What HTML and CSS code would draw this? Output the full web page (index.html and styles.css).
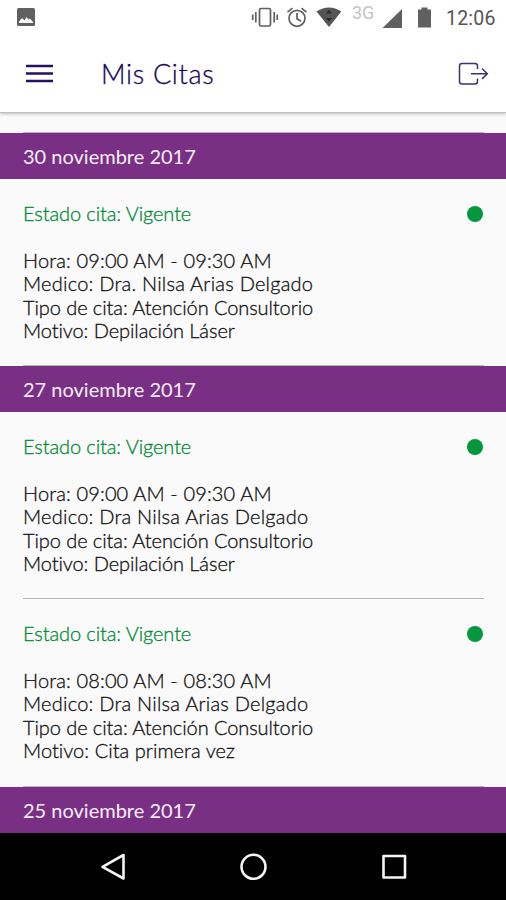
FILE: index.html
```html
<!DOCTYPE html>
<html lang="es">
<head>
<meta charset="utf-8">
<title>Mis Citas</title>
<link rel="stylesheet" href="styles.css">
</head>
<body>
<div class="screen">
  <header class="top">
    <div class="status">
      <svg class="picture" width="18" height="18" viewBox="0 0 18 18"><rect width="18" height="18" rx="1.500" fill="#606060"/><path d="M2 15V13.500l3-3.500 2.500 2.500L9.500 9l2 2.500 1.500-1 3 3.500v1z" fill="#fff"/></svg>
      <svg class="indicators" width="184" height="32" viewBox="250 0 184 32">
        <g fill="none" stroke="#606060" stroke-width="1.700">
          <rect x="259.500" y="8.500" width="11" height="17.500" rx="1.500"/>
          <path d="M255.800 12v10.500M252.700 14.500v5.500M274.200 12v10.500M277.200 14.500v5.500"/>
          <circle cx="297" cy="18.300" r="8"/><path d="M297 13v5.700l4 2.500M287.500 12.200l5-4M306.500 12.200l-5-4"/>
        </g>
        <path d="M316.500 11.500Q329 3.500 341.300 11.500L329 27z" fill="#555"/>
        <path d="M326 13.500l3-3.500 3 3.500zM326 18l3 3.500 3-3.500z" fill="#292929"/>
        <path d="M382.500 28L402 9v19z" fill="#606060"/>
        <path d="M418 9.500h3.500V7.500h6v2H431V27.500H418z" fill="#606060"/>
      </svg>
      <span class="network">3G</span>
      <time class="clock">12:06</time>
    </div>
    <div class="toolbar">
      <svg class="menu" width="27" height="20" viewBox="0 0 27 20"><path d="M0 2h27M0 9.500h27M0 17h27" stroke="#25135f" stroke-width="2.500"/></svg>
      <h1>Mis Citas</h1>
      <svg class="exit" width="32" height="24" viewBox="0 0 32 24"><path d="M19.500 7V4Q19.500 1.500 17 1.500H4Q1.500 1.500 1.500 4v15.500Q1.500 22 4 22h13q2.500 0 2.500-2.500v-3M13 11.700H29.300M24 6.500l5.300 5.200-5.300 5.200" fill="none" stroke="#403073" stroke-width="1.500"/></svg>
    </div>
  </header>
  <main>
    <div class="rule"></div>
    <h2>30 noviembre 2017</h2>
    <article>
      <div class="state"><span>Estado cita: Vigente</span><i class="dot"></i></div>
      <p class="hour">Hora: 09:00 AM - 09:30 AM</p>
      <p class="doctor">Medico: Dra. Nilsa Arias Delgado</p>
      <p class="type">Tipo de cita: Atención Consultorio</p>
      <p class="reason">Motivo: Depilación Láser</p>
    </article>
    <div class="rule"></div>
    <h2>27 noviembre 2017</h2>
    <article>
      <div class="state"><span>Estado cita: Vigente</span><i class="dot"></i></div>
      <p class="hour">Hora: 09:00 AM - 09:30 AM</p>
      <p class="doctor">Medico: Dra Nilsa Arias Delgado</p>
      <p class="type">Tipo de cita: Atención Consultorio</p>
      <p class="reason">Motivo: Depilación Láser</p>
    </article>
    <div class="rule"></div>
    <article class="last">
      <div class="state"><span>Estado cita: Vigente</span><i class="dot"></i></div>
      <p class="hour">Hora: 08:00 AM - 08:30 AM</p>
      <p class="doctor">Medico: Dra Nilsa Arias Delgado</p>
      <p class="type">Tipo de cita: Atención Consultorio</p>
      <p class="first">Motivo: Cita primera vez</p>
    </article>
    <div class="rule"></div>
    <h2>25 noviembre 2017</h2>
  </main>
  <nav>
    <svg width="506" height="67" viewBox="0 833 506 67" fill="none" stroke="#f4f4f4" stroke-width="2.600" stroke-linejoin="round"><path d="M123.500 855v23.500L102.500 866.800z"/><circle cx="253.500" cy="866.800" r="12"/><rect x="383.500" y="856" width="21.500" height="21.500"/></svg>
  </nav>
</div>
</body>
</html>
```
FILE: styles.css
```css
* { box-sizing: border-box; }
body { margin: 0; background: #fafafa; font-family: Lato, sans-serif; font-variant-ligatures: none; }
h1, h2, p { margin: 0; font-weight: 400; }
svg { display: block; flex: none; }
.screen { width: 506px; height: 900px; display: flex; flex-direction: column; overflow: hidden; }
.top { height: 113px; flex: none; background: #fff; border-bottom: 1px solid #c0c2c1; box-shadow: 0 1px 3px #bbb; }
.status { height: 35px; display: flex; align-items: flex-start; position: relative; }
.picture { margin: 8px 0 0 17px; }
.indicators { margin-left: 215px; }
.network { position: absolute; left: 352px; top: 3px; font: 400 18px/20px Roboto, sans-serif; color: #c4c4c4; }
.clock { margin: 7px 0 0 12px; font: 400 19.500px/23px Roboto, sans-serif; letter-spacing: .2px; color: #555; }
.toolbar { height: 77px; display: flex; align-items: center; padding: 0 16px 0 26px; }
h1 { margin-left: 48px; font-size: 27px; line-height: 34px; font-weight: 300; letter-spacing: .7px; color: #180558; -webkit-text-stroke: .3px; white-space: nowrap; }
.exit { margin-left: auto; }
main { height: 720px; flex: none; padding-top: 19px; }
.rule { height: 1px; margin: 0 22px 0 23px; background: #b5b5b5; }
h2 { height: 46px; padding-left: 23px; background: #792f83; color: #f6edf7; font-size: 20px; line-height: 47px; }
article { height: 186px; padding: 23px 23px 0; color: #111; font-size: 20px; font-weight: 300; line-height: 23.500px; -webkit-text-stroke: .3px; }
article.last { height: 187px; }
article p { font-weight: 300; white-space: nowrap; }
.hour { letter-spacing: .13px; }
.doctor { letter-spacing: .23px; }
.type, .reason { letter-spacing: -.08px; }
.first { letter-spacing: .04px; }
.state { display: flex; justify-content: space-between; align-items: center; height: 24px; margin-bottom: 22.500px; color: #008a36; letter-spacing: -.1px; }
.dot { width: 16px; height: 16px; border-radius: 50%; background: #05973e; }
nav { height: 67px; background: #000; flex: none; }
```
